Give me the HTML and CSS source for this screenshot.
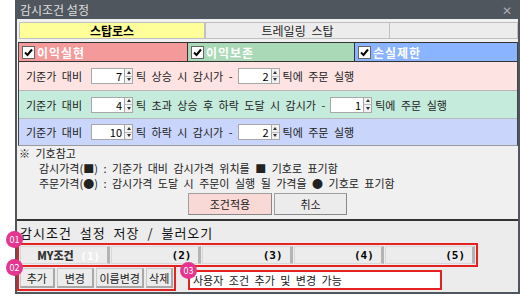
FILE: index.html
```html
<!DOCTYPE html>
<html>
<head>
  <meta charset="utf-8">
  <title>감시조건 설정</title>
  <link rel="stylesheet" href="styles.css">
</head>
<body>
  <div class="window">
    <div class="titlebar">
      <span>감시조건 설정</span>
      <span class="close">✕</span>
    </div>

    <div class="main">
      <div class="tabs">
        <div class="tab active">스탑로스</div>
        <div class="tab">트레일링 스탑</div>
        <div class="tab fill"></div>
      </div>

      <div class="panel">
        <div class="heads">
          <div class="head red"><span class="chk"><svg width="9" height="9" viewBox="0 0 9 9"><path d="M1 4.5 L3.5 7 L8 1.5" fill="none" stroke="#000" stroke-width="2"/></svg></span>이익실현</div>
          <div class="head green"><span class="chk"><svg width="9" height="9" viewBox="0 0 9 9"><path d="M1 4.5 L3.5 7 L8 1.5" fill="none" stroke="#000" stroke-width="2"/></svg></span>이익보존</div>
          <div class="head blue"><span class="chk"><svg width="9" height="9" viewBox="0 0 9 9"><path d="M1 4.5 L3.5 7 L8 1.5" fill="none" stroke="#000" stroke-width="2"/></svg></span>손실제한</div>
        </div>

        <div class="row pink">
          <span class="lbl">기준가 대비</span>
          <span class="spin"><span class="num">7</span><span class="arrows"><i class="up"></i><i class="down"></i></span></span>
          <span class="txt">틱 상승 시 감시가 -</span>
          <span class="spin"><span class="num">2</span><span class="arrows"><i class="up"></i><i class="down"></i></span></span>
          <span class="txt">틱에 주문 실행</span>
        </div>
        <div class="row mint">
          <span class="lbl">기준가 대비</span>
          <span class="spin"><span class="num">4</span><span class="arrows"><i class="up"></i><i class="down"></i></span></span>
          <span class="txt">틱 초과 상승 후 하락 도달 시 감시가 -</span>
          <span class="spin"><span class="num">1</span><span class="arrows"><i class="up"></i><i class="down"></i></span></span>
          <span class="txt">틱에 주문 실행</span>
        </div>
        <div class="row lilac">
          <span class="lbl">기준가 대비</span>
          <span class="spin"><span class="num">10</span><span class="arrows"><i class="up"></i><i class="down"></i></span></span>
          <span class="txt">틱 하락 시 감시가 -</span>
          <span class="spin"><span class="num">2</span><span class="arrows"><i class="up"></i><i class="down"></i></span></span>
          <span class="txt">틱에 주문 실행</span>
        </div>
      </div>

      <div class="legend">
        <div>※ 기호참고</div>
        <div class="sub">감시가격(■) : 기준가 대비 감시가격 위치를 ■ 기호로 표기함</div>
        <div class="sub">주문가격(●) : 감시가격 도달 시 주문이 실행 될 가격을 ● 기호로 표기함</div>
      </div>

      <div class="actions">
        <button class="btn apply">조건적용</button>
        <button class="btn">취소</button>
      </div>
    </div>

    <div class="save">
      <div class="save-title">감시조건 설정 저장 / 불러오기</div>

      <div class="mark slots">
        <span class="badge">01</span>
        <button class="slot"><b>MY조건</b> <span class="dim">(1)</span></button>
        <button class="slot">(2)</button>
        <button class="slot">(3)</button>
        <button class="slot">(4)</button>
        <button class="slot">(5)</button>
      </div>

      <div class="lower">
        <div class="mark tools">
          <span class="badge">02</span>
          <button class="tool w1">추가</button>
          <button class="tool w2">변경</button>
          <button class="tool w3">이름변경</button>
          <button class="tool w4">삭제</button>
        </div>
        <div class="mark memo">
          <span class="badge">03</span>
          <div class="memo-box">사용자 조건 추가 및 변경 가능</div>
        </div>
      </div>
    </div>
  </div>
</body>
</html>
```

FILE: styles.css
```css
/* Basic reset */
body {
  margin: 0;
  background-color: #fff;
  font-family: "Noto Sans CJK KR", sans-serif;
  font-size: 11px;
  color: #222;
}
button {
  font-family: inherit;
  font-size: 11px;
  color: #222;
  padding: 0;
  margin: 0;
  cursor: pointer;
}

/* Window frame */
.window {
  margin-left: 15px;
  width: 505px;
  height: 294px;
  box-sizing: border-box;
  background-color: #ececec;
  border: 2px solid #50565e;
  border-top: none;
}
.titlebar {
  height: 19px;
  margin: 0 -2px;
  padding: 0 8px 0 5px;
  background-color: #50565e;
  color: #dedede;
  font-size: 12px;
  display: flex;
  align-items: center;
  justify-content: space-between;
}
.close {
  color: #a6abb2;
  font-size: 12px;
}

/* Tabs */
.main {
  background-color: #f0f0f0;
  padding: 3px 0 0;
  height: 202px;
  box-sizing: border-box;
  border-bottom: 2px solid #333;
}
.tabs {
  display: flex;
  height: 17px;
  margin-left: 2px;
}
.tab {
  width: 185px;
  box-sizing: border-box;
  border: 1px solid #c0c0c0;
  background-color: #ececec;
  text-align: center;
  line-height: 15px;
  font-size: 12px;
  word-spacing: 3px;
}
.tab.active {
  background-color: #ffff99;
  font-weight: bold;
  color: #000;
  width: 186px;
}
.tab.fill {
  flex: 1;
  border-left: none;
}

/* Condition panel */
.panel {
  margin: 3px 0 0 1px;
  border-left: 1px solid #444;
  border-right: 1px solid #444;
  border-bottom: 1px solid #9a9a9a;
}
.heads {
  display: flex;
  height: 20px;
  border-top: 1px solid #333;
  border-bottom: 1px solid #333;
  box-sizing: border-box;
}
.head {
  display: flex;
  align-items: center;
  gap: 2px;
  padding-left: 3px;
  color: #fff;
  font-weight: bold;
  font-size: 12px;
  letter-spacing: 1px;
}
.head.red {
  width: 165px;
  background-color: #f49a9a;
  border-right: 1px solid #333;
}
.head.green {
  width: 163px;
  background-color: #a9d9b6;
  border-right: 1px solid #333;
}
.head.blue {
  flex: 1;
  background-color: #8ab4ff;
}
.chk {
  width: 11px;
  height: 11px;
  background-color: #fff;
  border: 1px solid #666;
  display: flex;
  align-items: center;
  justify-content: center;
}

.row {
  height: 28px;
  display: flex;
  align-items: center;
  padding-left: 7px;
  box-sizing: border-box;
  border-top: 1px solid #b8b8b8;
  word-spacing: 3px;
}
.row.pink {
  background-color: #fde3e2;
  border-top: none;
}
.row.mint {
  background-color: #c5ebdc;
}
.row.lilac {
  background-color: #cad5fc;
  height: 27px;
}
.lbl {
  width: 65px;
}
.txt {
  margin: 0 5px 0 3px;
}
.spin {
  display: flex;
  height: 16px;
}
.num {
  width: 33px;
  box-sizing: border-box;
  background-color: #fff;
  border: 1px solid #a8a8a8;
  border-right: none;
  text-align: right;
  padding-right: 2px;
  line-height: 14px;
  color: #000;
}
.arrows {
  width: 9px;
  display: flex;
  flex-direction: column;
  border: 1px solid #a8a8a8;
  box-sizing: border-box;
  background-color: #f2f2f2;
}
.arrows i {
  flex: 1;
  display: flex;
  align-items: center;
  justify-content: center;
}
.arrows i.up {
  border-bottom: 1px solid #bbb;
}
.arrows i::after {
  content: "";
  border-left: 2px solid transparent;
  border-right: 2px solid transparent;
}
.arrows i.up::after {
  border-bottom: 3px solid #333;
}
.arrows i.down::after {
  border-top: 3px solid #333;
}

/* Legend */
.legend {
  padding-left: 2px;
  line-height: 15px;
  word-spacing: 3px;
}
.legend .sub {
  padding-left: 20px;
}

.actions {
  display: flex;
  gap: 2px;
  margin: 2px 0 0 171px;
}
.btn {
  height: 22px;
  width: 84px;
  background-color: #ececec;
  border: 1px solid #a0a0a0;
  border-right-color: #888;
  border-bottom-color: #888;
}
.btn.apply {
  background-color: #f9d9d5;
}
.btn + .btn {
  width: 73px;
}

/* Save / load section */
.save {
  padding: 4px 0 0;
}
.save-title {
  font-size: 13px;
  line-height: 16px;
  padding-left: 3px;
  color: #111;
  word-spacing: 4px;
  letter-spacing: 1px;
}
.mark {
  position: relative;
  border: 2px solid #e52222;
  box-sizing: border-box;
}
.badge {
  position: absolute;
  width: 17px;
  height: 17px;
  border-radius: 50%;
  background-color: #e6358f;
  color: #fff;
  font-size: 9px;
  line-height: 17px;
  text-align: center;
}
.slots {
  display: flex;
  width: 461px;
  height: 24px;
  margin-top: 2px;
  padding: 1px;
  gap: 1px;
}
.slots .badge {
  left: -13px;
  top: -14px;
}
.slot {
  flex: 1;
  background-color: #ececec;
  border: 1px solid #d8d8d8;
  border-right: 3px solid #b4b4b4;
  text-align: right;
  padding-right: 7px;
  font-weight: bold;
  font-family: "DejaVu Sans Mono", "Noto Sans CJK KR", monospace;
  font-size: 11px;
  color: #000;
}
.slot b {
  font-family: "Noto Sans CJK KR", sans-serif;
  color: #333;
}
.slot .dim {
  color: #fff;
}

.lower {
  display: flex;
  align-items: flex-start;
}
.tools {
  display: flex;
  width: 159px;
  height: 24px;
  padding: 1px;
  gap: 2px;
  border-top: none;
}
.tools .badge {
  left: -13px;
  top: -8px;
}
.tool {
  height: 20px;
  background-color: #ececec;
  border: 1px solid #c8c8c8;
  border-right: 2px solid #a8a8a8;
  border-bottom: 2px solid #a8a8a8;
}
.tool.w1 { width: 35px; }
.tool.w2 { width: 38px; }
.tool.w3 { width: 49px; }
.tool.w4 { width: 27px; }

.memo {
  margin: 3px 0 0 12px;
  width: 254px;
  height: 20px;
  background-color: #fff;
}
.memo .badge {
  left: -10px;
  top: -10px;
}
.memo-box {
  padding-left: 3px;
  line-height: 16px;
  word-spacing: 3px;
}
```
